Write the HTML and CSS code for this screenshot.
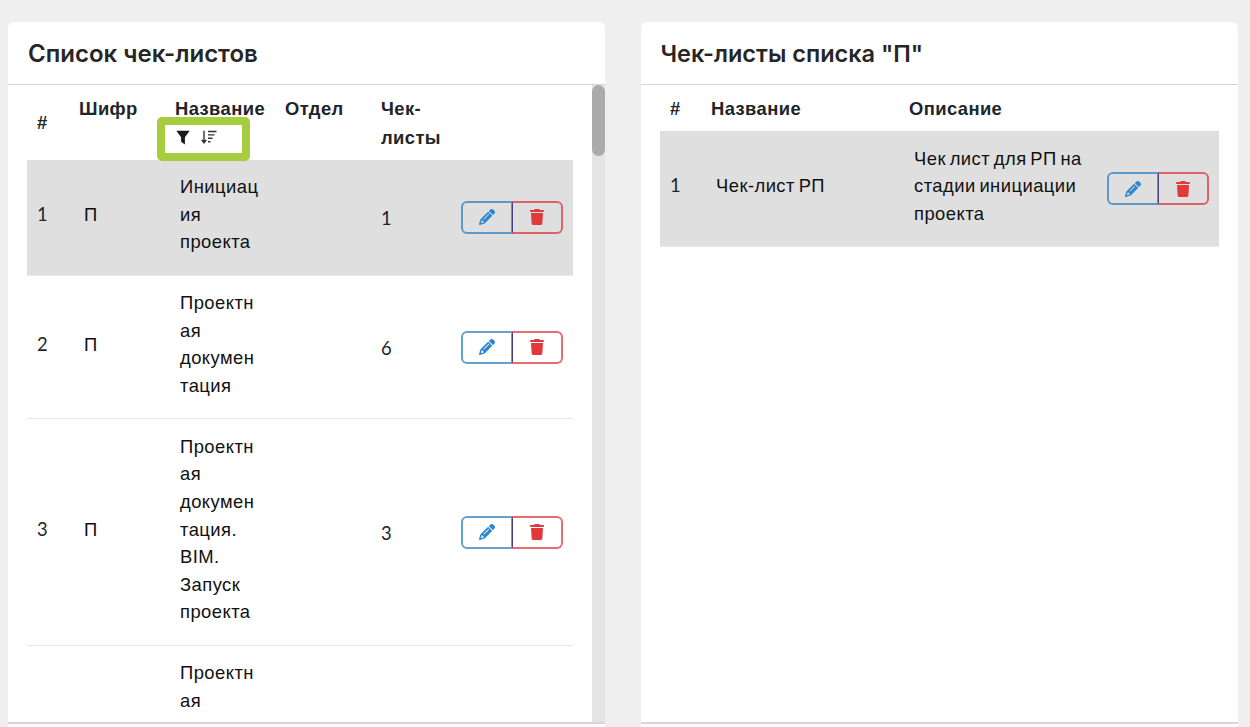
FILE: index.html
```html
<!DOCTYPE html>
<html lang="ru">
<head>
<meta charset="utf-8">
<title>Чек-листы</title>
<link rel="stylesheet" href="styles.css">
</head>
<body>
<svg class="defs" width="0" height="0" aria-hidden="true">
  <symbol id="pencil" viewBox="0 0 512 512"><path d="M410.3 231l11.3-11.3-33.9-33.9-62.1-62.1L291.7 89.8l-11.3 11.3-22.6 22.6L58.6 322.9c-10.4 10.4-18 23.3-22.2 37.4L1 480.7c-2.5 8.4-.2 17.5 6.1 23.7s15.3 8.5 23.7 6.1l120.3-35.4c14.1-4.2 27-11.8 37.4-22.2L387.7 253.7 410.3 231zM160 399.4l-9.1 22.7c-4 3.1-8.5 5.4-13.3 6.9L59.4 452l23-78.1c1.4-4.9 3.8-9.4 6.9-13.3l22.7-9.1v32c0 8.8 7.2 16 16 16h32zM362.7 18.7L348.3 33.2 325.7 55.8 314.3 67.1l33.9 33.9 62.1 62.1 33.9 33.9 11.3-11.3 22.6-22.6 14.5-14.5c25-25 25-65.5 0-90.5L453.3 18.7c-25-25-65.5-25-90.5 0zm-47.4 168l-144 144c-6.2 6.2-16.4 6.2-22.6 0s-6.2-16.4 0-22.6l144-144c6.2-6.2 16.4-6.2 22.6 0s6.2 16.4 0 22.6z"/></symbol>
  <symbol id="trash" viewBox="0 0 448 512"><path d="M135.2 17.7L128 32H32C14.3 32 0 46.3 0 64S14.3 96 32 96H416c17.7 0 32-14.3 32-32s-14.3-32-32-32H320l-7.2-14.3C307.4 6.8 296.3 0 284.2 0H163.8c-12.1 0-23.2 6.8-28.6 17.7zM416 128H32L53.2 467c1.6 25.3 22.6 45 47.9 45H346.9c25.3 0 46.3-19.7 47.9-45L416 128z"/></symbol>
</svg>
<main class="layout">
  <section class="panel">
    <h2 class="panel-title">Список чек-листов</h2>
    <div class="panel-body">
      <div class="table-wrap table-wrap-left">
        <table class="grid grid-left">
          <thead>
            <tr>
              <th class="mid c-num">#</th>
              <th class="c-code">Шифр</th>
              <th class="c-name">Название
                <div class="tools">
                  <svg class="ico-filter" viewBox="0 0 14 15"><path d="M0.3 0.8h13.4l-4.8 6.4v7.2l-3.8-2.6V7.2z"/></svg>
                  <svg class="ico-sort" viewBox="0 0 16 15"><path d="M3 0.8v11.7M0.7 9.8 3 12.8l2.3-3M7 1.5h8.5M7 4.9h6.5M7 8.3h4.5M7 11.7h2.5"/></svg>
                </div>
                <span class="highlight"></span>
              </th>
              <th class="c-dept">Отдел</th>
              <th class="c-count">Чек-листы</th>
              <th class="c-act"></th>
            </tr>
          </thead>
          <tbody>
            <tr class="selected">
              <td class="lift">1</td><td class="lift text">П</td><td class="lift text">Инициация проекта</td><td></td><td>1</td>
              <td><div class="actions"><button class="btn btn-edit"><svg class="ico"><use href="#pencil"/></svg></button><button class="btn btn-del"><svg class="ico"><use href="#trash"/></svg></button></div></td>
            </tr>
            <tr>
              <td class="lift">2</td><td class="lift text">П</td><td class="lift text">Проектная документация</td><td></td><td>6</td>
              <td><div class="actions"><button class="btn btn-edit"><svg class="ico"><use href="#pencil"/></svg></button><button class="btn btn-del"><svg class="ico"><use href="#trash"/></svg></button></div></td>
            </tr>
            <tr>
              <td class="lift">3</td><td class="lift text">П</td><td class="lift text">Проектная документация. BIM. Запуск проекта</td><td></td><td>3</td>
              <td><div class="actions"><button class="btn btn-edit"><svg class="ico"><use href="#pencil"/></svg></button><button class="btn btn-del"><svg class="ico"><use href="#trash"/></svg></button></div></td>
            </tr>
            <tr>
              <td class="lift"></td><td class="lift text"></td><td class="lift text">Проектная</td><td></td><td></td><td></td>
            </tr>
          </tbody>
        </table>
      </div>
      <div class="track"><div class="thumb"></div></div>
    </div>
    <div class="panel-foot"></div>
  </section>
  <section class="panel">
    <h2 class="panel-title panel-title-right">Чек-листы списка "П"</h2>
    <div class="panel-body">
      <div class="table-wrap">
        <table class="grid grid-right">
          <thead>
            <tr>
              <th class="r-num">#</th>
              <th class="r-name">Название</th>
              <th class="r-desc">Описание</th>
              <th class="r-act"></th>
            </tr>
          </thead>
          <tbody>
            <tr class="selected">
              <td class="lift">1</td><td class="lift text">Чек-лист РП</td><td class="lift text">Чек лист для РП на стадии инициации проекта</td>
              <td><div class="actions"><button class="btn btn-edit"><svg class="ico"><use href="#pencil"/></svg></button><button class="btn btn-del"><svg class="ico"><use href="#trash"/></svg></button></div></td>
            </tr>
          </tbody>
        </table>
      </div>
    </div>
    <div class="panel-foot"></div>
  </section>
</main>
</body>
</html>
```
FILE: styles.css
```css
html, body { height: 100%; }
body {
  margin: 0;
  background: #efefef;
  overflow: hidden;
  font-family: "Lato", "Liberation Sans", sans-serif;
  font-size: 18.4px;
  color: #212529;
}
.defs { position: absolute; }
.layout {
  display: grid;
  grid-template-columns: 597px 597px;
  column-gap: 36px;
  padding: 22px 12px 0 8px;
}
.panel {
  background: #fff;
  border-radius: 6px 6px 0 0;
  display: flex;
  flex-direction: column;
  height: 705px;
}
.panel-title {
  margin: 0;
  height: 63px;
  box-sizing: border-box;
  padding: 0 20px;
  display: flex;
  align-items: center;
  font-family: "Inter", "Roboto", sans-serif;
  font-size: 24px;
  font-weight: 600;
  color: #262626;
  border-bottom: 1px solid #d6d6d6;
  flex: none;
}
.panel-title-right { font-size: 23.5px; padding-left: 19.5px; }
.panel-body {
  display: flex;
  height: 637px;
  flex: none;
  overflow: hidden;
  border-bottom: 2px solid #d6d6d6;
}
.panel-foot { flex: 1; }
.table-wrap { flex: 1; min-width: 0; padding: 0 19px; overflow: hidden; }
.table-wrap-left { padding-right: 0; }
.track { width: 13px; background: #e4e4e4; flex: none; }
.thumb { height: 71px; background: #ababab; border-radius: 7px; }
.grid { border-collapse: collapse; table-layout: fixed; }
.grid-left { width: 546px; }
.grid-right { width: 559px; }
th {
  text-align: left;
  vertical-align: top;
  padding: 9px 10px 0;
  font-family: "Liberation Sans", sans-serif;
  font-size: 18.4px;
  font-weight: 700;
  letter-spacing: 0.4px;
  line-height: 29px;
  position: relative;
}
th.mid { vertical-align: middle; padding-top: 0; }
.grid-left thead tr { height: 74.5px; }
.grid-right thead tr { height: 46px; }
.c-num { width: 22px; }
.c-code { width: 76px; }
.c-name { width: 90px; }
.c-dept { width: 76px; }
.c-count { width: 60px; }
.c-act { width: 102px; }
.r-num { width: 21px; }
.r-name { width: 178px; }
.r-desc { width: 178px; }
.r-act { width: 102px; }
.tools { display: flex; align-items: center; height: 28px; margin-left: 1px; }
.ico-filter { width: 14px; height: 15px; fill: #1a1a1a; }
.ico-sort { width: 16px; height: 15px; margin-left: 11px; fill: none; stroke: #333; stroke-width: 1.4; }
.highlight {
  position: absolute;
  left: -8px;
  top: 32px;
  width: 77px;
  height: 28px;
  border: 8px solid #a5cd3e;
  border-radius: 5px;
  pointer-events: none;
}
td {
  padding: 17.5px 10px 14.83px;
  vertical-align: middle;
  line-height: 27.6px;
  color: #212529;
  overflow-wrap: anywhere;
  border-bottom: 1px solid #e9e9e9;
}
td.lift { padding-top: 13.5px; padding-bottom: 18.83px; }
td.text {
  padding-left: 15px;
  padding-right: 15px;
  font-family: "Liberation Sans", sans-serif;
  color: #111;
  letter-spacing: 0.45px;
  word-spacing: -1.8px;
}
.selected td { background: #dfdfdf; }
.actions { display: flex; margin-top: -2px; }
.btn {
  width: 51px;
  height: 33px;
  padding: 0;
  background: transparent;
  display: flex;
  align-items: center;
  justify-content: center;
  border: 2px solid;
}
.btn-edit { border-color: rgba(36, 120, 190, 0.7); color: #2f86d0; border-radius: 6px 0 0 6px; border-right-width: 1px; }
.btn-del { border-color: rgba(217, 48, 52, 0.7); color: #e03a3c; border-radius: 0 6px 6px 0; width: 52px; border-left: 1px solid #4a3f86; }
.ico { width: 16px; height: 16px; fill: currentColor; }
```
